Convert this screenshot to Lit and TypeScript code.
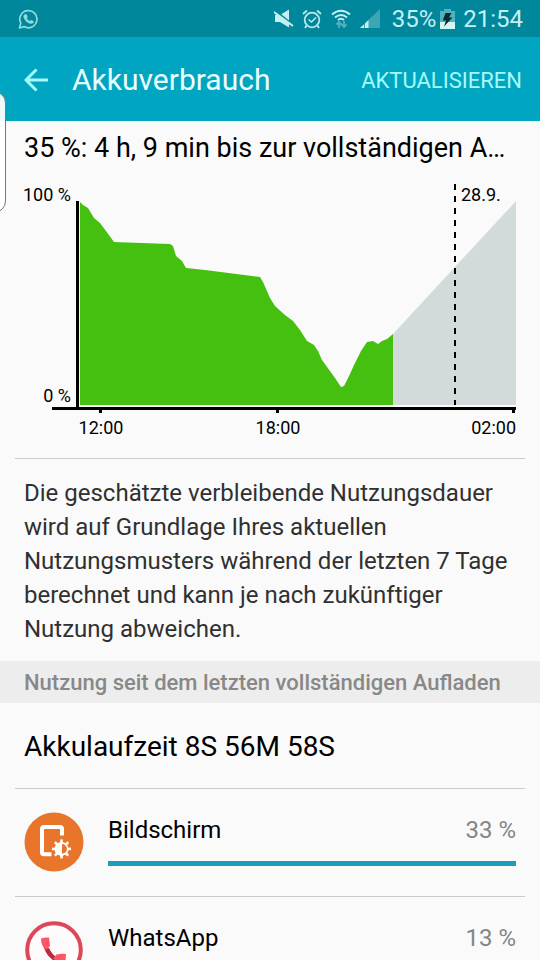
import { LitElement, html, css, svg, TemplateResult } from "lit";
import { customElement, property } from "lit/decorators.js";

interface Consumer {
  name: string;
  percent: number;
  icon: TemplateResult;
}

const screenIcon = html`
  <svg viewBox="0 0 60 60" aria-hidden="true">
    <circle cx="30" cy="30" r="29.5" fill="#e9752b" />
    <path d="M27.500 42.300H20a2 2 0 0 1-2-2V17a2 2 0 0 1 2-2h16a2 2 0 0 1 2 2v6.500" fill="none" stroke="#fff" stroke-width="4" />
    <g fill="#fff">
      ${[0, 45, 90, 135].map(
        (a) => svg`<rect x="36.2" y="27.4" width="2.6" height="19" transform="rotate(${a} 37.5 36.9)" />`,
      )}
      <circle cx="37.5" cy="36.9" r="7" />
    </g>
    <path d="M38 32a4.9 4.9 0 0 1 0 9.8z" fill="#e9752b" />
  </svg>
`;

const phoneIcon = html`
  <svg viewBox="0 0 60 60" aria-hidden="true">
    <circle cx="30" cy="30" r="26.8" fill="#fdfbfc" stroke="#de4659" stroke-width="4" />
    <path d="M20 28q3 9 12 14l2-4q-6-3-9-10z" fill="#b82b42" />
    <path d="M17 18.500q4-1.500 8-1l1 8.500-4 4q-5-4-5-11.500zM29.500 38l3-3.500q4.500-1.200 9.500-.5l-.5 8q-5 2-9.500 0z" fill="#ff5667" />
  </svg>
`;

@customElement("status-bar")
export class StatusBar extends LitElement {
  static styles = css`
    :host {
      display: flex;
      align-items: center;
      justify-content: space-between;
      height: 37px;
      padding: 0 17px 0 18px;
      background: #00879c;
      color: #c5f0f2;
      font-size: 24px;
      line-height: 40px;
    }
    svg {
      display: block;
    }
    .group {
      display: flex;
      align-items: center;
      gap: 8px;
    }
    .charge {
      display: flex;
      align-items: center;
      gap: 4px;
      margin-left: 4px;
    }
  `;

  render() {
    return html`
      <svg width="21" height="20" viewBox="0 0 21 20" aria-label="WhatsApp">
        <path d="M1.500 19l1.300-4.800a8.600 8.600 0 1 1 3.300 3.400z" fill="none" stroke="#8fd9df" stroke-width="1.700" stroke-linejoin="round" />
        <path d="M7 5.300l1.500-.2 1.200 2.800-.9 1.300q1 2 3.100 2.900l1.300-1.200 2.600 1.300q.2 2-2.100 2.600-2.800.3-5.800-2.600-2.800-2.900-2.500-4.900.3-1.500 1.600-2z" fill="#8fd9df" />
      </svg>
      <div class="group">
        <svg width="20" height="20" viewBox="0 0 20 20" aria-label="Ton aus">
          <path d="M1 6h5l9-5.500v18L6 13H1z" fill="#c5f0f2" />
          <path d="M0 1l20 16" stroke="#00879c" stroke-width="2.500" />
          <path d="M0 3l19 14" stroke="#c5f0f2" stroke-width="2" />
        </svg>
        <svg width="20" height="20" viewBox="0 0 20 20" fill="none" stroke="#b5e9ec" aria-label="Wecker">
          <circle cx="10" cy="11" r="7.300" stroke-width="1.800" />
          <path d="M1 5l4-3.500M19 5l-4-3.500M4.500 16.500L3 19M15.500 16.500L17 19" stroke-width="1.800" />
          <path d="M6.500 10.500l3 2.500 4.500-4.500" stroke-width="1.600" />
        </svg>
        <svg width="22" height="20" viewBox="0 0 22 20" fill="none" aria-label="WLAN">
          <path d="M2 5.500q9-7.500 18 0M5 8.500q6-5 12 0M8 11q3-2.500 6 0" stroke="#c5f0f2" stroke-width="2" />
          <path d="M9 19v-6M6.500 15.500L9 13l2.500 2.500M14 12v6M11.500 15.500L14 18l2.500-2.500" stroke="#51b2bf" stroke-width="1.800" />
        </svg>
        <svg width="20" height="20" viewBox="0 0 20 20" aria-label="Signal">
          <path d="M0 19L20 0v19z" fill="#3da6b5" />
          <path d="M0 19l4-3.500V19zM5 14.500l3.500-3.500v8H5z" fill="#c5f0f2" />
        </svg>
        <div class="charge">
          <span>35%</span>
          <svg width="15" height="20" viewBox="0 0 15 20" aria-label="Akku lädt">
            <path d="M4 0h7v2h4v18H0V2h4z" fill="#51b2bf" />
            <path d="M0 13h15v7H0z" fill="#d3f6f5" />
            <path d="M5.500 4h6l-2.500 4.500h3.500L4 17.500l2-6H2.800z" fill="#0b2b31" />
          </svg>
        </div>
        <time>21:54</time>
      </div>
    `;
  }
}

@customElement("battery-chart")
export class BatteryChart extends LitElement {
  static styles = css`
    :host {
      display: block;
    }
    .plot {
      display: block;
      width: 100%;
      height: auto;
      font-size: 18px;
      fill: #000;
    }
    .level {
      fill: #45c010;
    }
    .forecast {
      fill: #d3dadb;
    }
    .midnight {
      stroke: #000;
      stroke-width: 2;
      stroke-dasharray: 6 6;
    }
    .axis {
      fill: none;
      stroke: #000;
      stroke-width: 3;
    }
    .end {
      text-anchor: end;
    }
    .middle {
      text-anchor: middle;
    }
  `;

  render() {
    return html`
      <svg class="plot" viewBox="0 170 540 288" role="img" aria-label="Akkuladung im Zeitverlauf">
        <path class="forecast" d="M393 334L516 201V405H393z" />
        <path
          class="level"
          d="M80 202L83 205L88 208L94 218L100 223L106 231L114 242L170 244L173 246L176 256L182 261L186 268L205 270L260 277L263 282L270 298L275 306L285 315L293 321L300 330L307 341L314 345L318 351L322 360L335 378L341 387L344 386L350 374L354 365L361 351L367 342L373 341L378 344L382 341L387 339L393 334V405H80z"
        />
        <path class="midnight" d="M455 184V405" />
        <path class="axis" d="M77.500 201V408M52 408.500H516M100.500 408V413M277.500 408V413M513.500 408V413" />
        <text class="end" x="71" y="201">100 %</text>
        <text class="end" x="71" y="402">0 %</text>
        <text x="461" y="201">28.9.</text>
        <text class="middle" x="101" y="434">12:00</text>
        <text class="middle" x="278" y="434">18:00</text>
        <text class="end" x="516" y="434">02:00</text>
      </svg>
    `;
  }
}

@customElement("usage-row")
export class UsageRow extends LitElement {
  @property({ attribute: false }) item!: Consumer;
  @property({ type: Number }) max = 100;

  static styles = css`
    :host {
      display: flex;
      gap: 24px;
      height: 107px;
      margin: 0 15px;
      padding: 0 9px;
      border-top: 1px solid #cacaca;
    }
    .icon {
      flex: none;
      width: 60px;
      height: 60px;
      margin-top: 23px;
    }
    .info {
      flex: 1;
      padding-top: 24px;
    }
    .line {
      display: flex;
      justify-content: space-between;
      font-size: 24px;
      line-height: 34px;
    }
    .value {
      color: #858585;
    }
    .bar {
      height: 5px;
      margin-top: 14px;
      background: #1c9dbc;
    }
  `;

  render() {
    const { name, percent, icon } = this.item;
    return html`
      <div class="icon">${icon}</div>
      <div class="info">
        <div class="line"><span>${name}</span><span class="value">${percent} %</span></div>
        <div class="bar" style="width:${(percent / this.max) * 100}%"></div>
      </div>
    `;
  }
}

@customElement("app-root")
export class AppRoot extends LitElement {
  private consumers: Consumer[] = [
    { name: "Bildschirm", percent: 33, icon: screenIcon },
    { name: "WhatsApp", percent: 13, icon: phoneIcon },
  ];

  static styles = css`
    :host {
      display: flex;
      flex-direction: column;
      position: relative;
      height: 100vh;
      overflow: hidden;
      background: #fafafa;
      color: #000;
      font-family: Roboto, "Noto Sans", sans-serif;
    }
    status-bar,
    .toolbar {
      flex: none;
    }
    .toolbar {
      display: flex;
      align-items: center;
      box-sizing: border-box;
      height: 84px;
      padding: 2px 18px 0 24px;
      background: #00a5c2;
    }
    button {
      padding: 0;
      border: 0;
      background: none;
      color: #a5fbf8;
      font: inherit;
      cursor: pointer;
    }
    .back {
      width: 24px;
      margin-right: 24px;
    }
    .back svg {
      display: block;
    }
    .title {
      flex: 1;
      margin: 0;
      color: #e9ffff;
      font-size: 30px;
      font-weight: 400;
      line-height: 40px;
    }
    .refresh {
      font-size: 22px;
    }
    .content {
      flex: 1;
      min-height: 0;
      overflow-y: auto;
      scrollbar-width: none;
    }
    .summary,
    .runtime {
      margin: 0;
      padding: 0 24px;
      font-size: 27px;
      font-weight: 400;
    }
    .summary {
      padding-top: 5px;
      line-height: 44px;
      overflow: hidden;
      text-overflow: ellipsis;
      white-space: nowrap;
    }
    .hint {
      margin: 0 15px;
      padding: 17px 9px 15px;
      border-top: 1px solid #cacaca;
      color: #303030;
      font-size: 24px;
      line-height: 34px;
    }
    .section {
      margin: 0;
      padding: 2px 24px 0;
      background: #ededed;
      color: #888;
      font-size: 22px;
      font-weight: 500;
      line-height: 40px;
      white-space: nowrap;
    }
    .runtime {
      padding-top: 3px;
      font-size: 28px;
      line-height: 82px;
    }
    .edge-handle {
      position: absolute;
      top: 91px;
      left: -20px;
      width: 24px;
      height: 120px;
      border: 1px solid #777;
      border-radius: 12px;
      background: #fffe;
    }
  `;

  render() {
    const max = Math.max(...this.consumers.map((c) => c.percent));
    return html`
      <status-bar></status-bar>
      <header class="toolbar">
        <button class="back" aria-label="Zurück">
          <svg width="24" height="24" viewBox="0 0 24 24" fill="none" stroke="#a5fbf8" stroke-width="3">
            <path d="M24 12H2M12.500 1.500L2 12l10.500 10.500" />
          </svg>
        </button>
        <h1 class="title">Akkuverbrauch</h1>
        <button class="refresh">AKTUALISIEREN</button>
      </header>
      <main class="content">
        <h2 class="summary">35 %: 4 h, 9 min bis zur vollständigen Aufladung</h2>
        <battery-chart></battery-chart>
        <p class="hint">
          Die geschätzte verbleibende Nutzungsdauer wird auf Grundlage Ihres aktuellen Nutzungsmusters während der
          letzten 7 Tage berechnet und kann je nach zukünftiger Nutzung abweichen.
        </p>
        <h3 class="section">Nutzung seit dem letzten vollständigen Aufladen</h3>
        <p class="runtime">Akkulaufzeit 8S 56M 58S</p>
        ${this.consumers.map((c) => html`<usage-row .item=${c} .max=${max}></usage-row>`)}
      </main>
      <div class="edge-handle"></div>
    `;
  }
}
